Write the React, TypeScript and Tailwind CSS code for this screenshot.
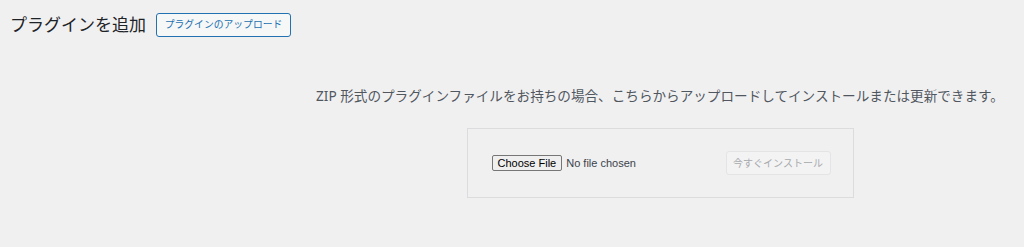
import React from 'react';

const jp = { fontFamily: '"Noto Sans", "Noto Sans CJK JP", sans-serif' };
const latin = { fontFamily: '"Liberation Sans", Arial, sans-serif' };

export default function App() {
  return (
    <div className="h-[247px] w-[1024px] overflow-hidden bg-[#f0f0f1] text-[#1d2327]" style={jp}>
      <div className="flex items-center pl-[10px] pt-[13px]">
        <h1 className="text-[17px] leading-[24px] font-normal text-[#1d2327]">プラグインを追加</h1>
        <button
          type="button"
          className="ml-[10px] h-[24px] w-[135px] rounded-[3px] border border-[#2271b1] bg-[#f6f7f7] text-[9.8px] text-[#2271b1]"
        >
          プラグインのアップロード
        </button>
      </div>

      <div className="pl-[296px]">
        <p className="mt-[49px] text-center text-[13.6px] leading-[20px] text-[#50575e]">
          ZIP 形式のプラグインファイルをお持ちの場合、こちらからアップロードしてインストールまたは更新できます。
        </p>

        <div className="mx-auto mt-[22px] flex h-[70px] w-[387px] items-center justify-between border border-[#dcdcde] pl-[24px] pr-[22px]">
          <div className="flex items-center">
            <span
              className="flex h-[16px] items-center rounded-[2px] border border-[#767676] bg-[#efefef] px-[5px] text-[11px] text-black"
              style={latin}
            >
              Choose File
            </span>
            <span className="ml-[4px] text-[11px] text-[#3c434a]" style={latin}>
              No file chosen
            </span>
          </div>
          <button
            type="button"
            disabled
            className="h-[24px] w-[105px] rounded-[3px] border border-[#e4e4e6] bg-[#f3f3f4] text-[10px] text-[#a7aaad]"
          >
            今すぐインストール
          </button>
        </div>
      </div>
    </div>
  );
}
